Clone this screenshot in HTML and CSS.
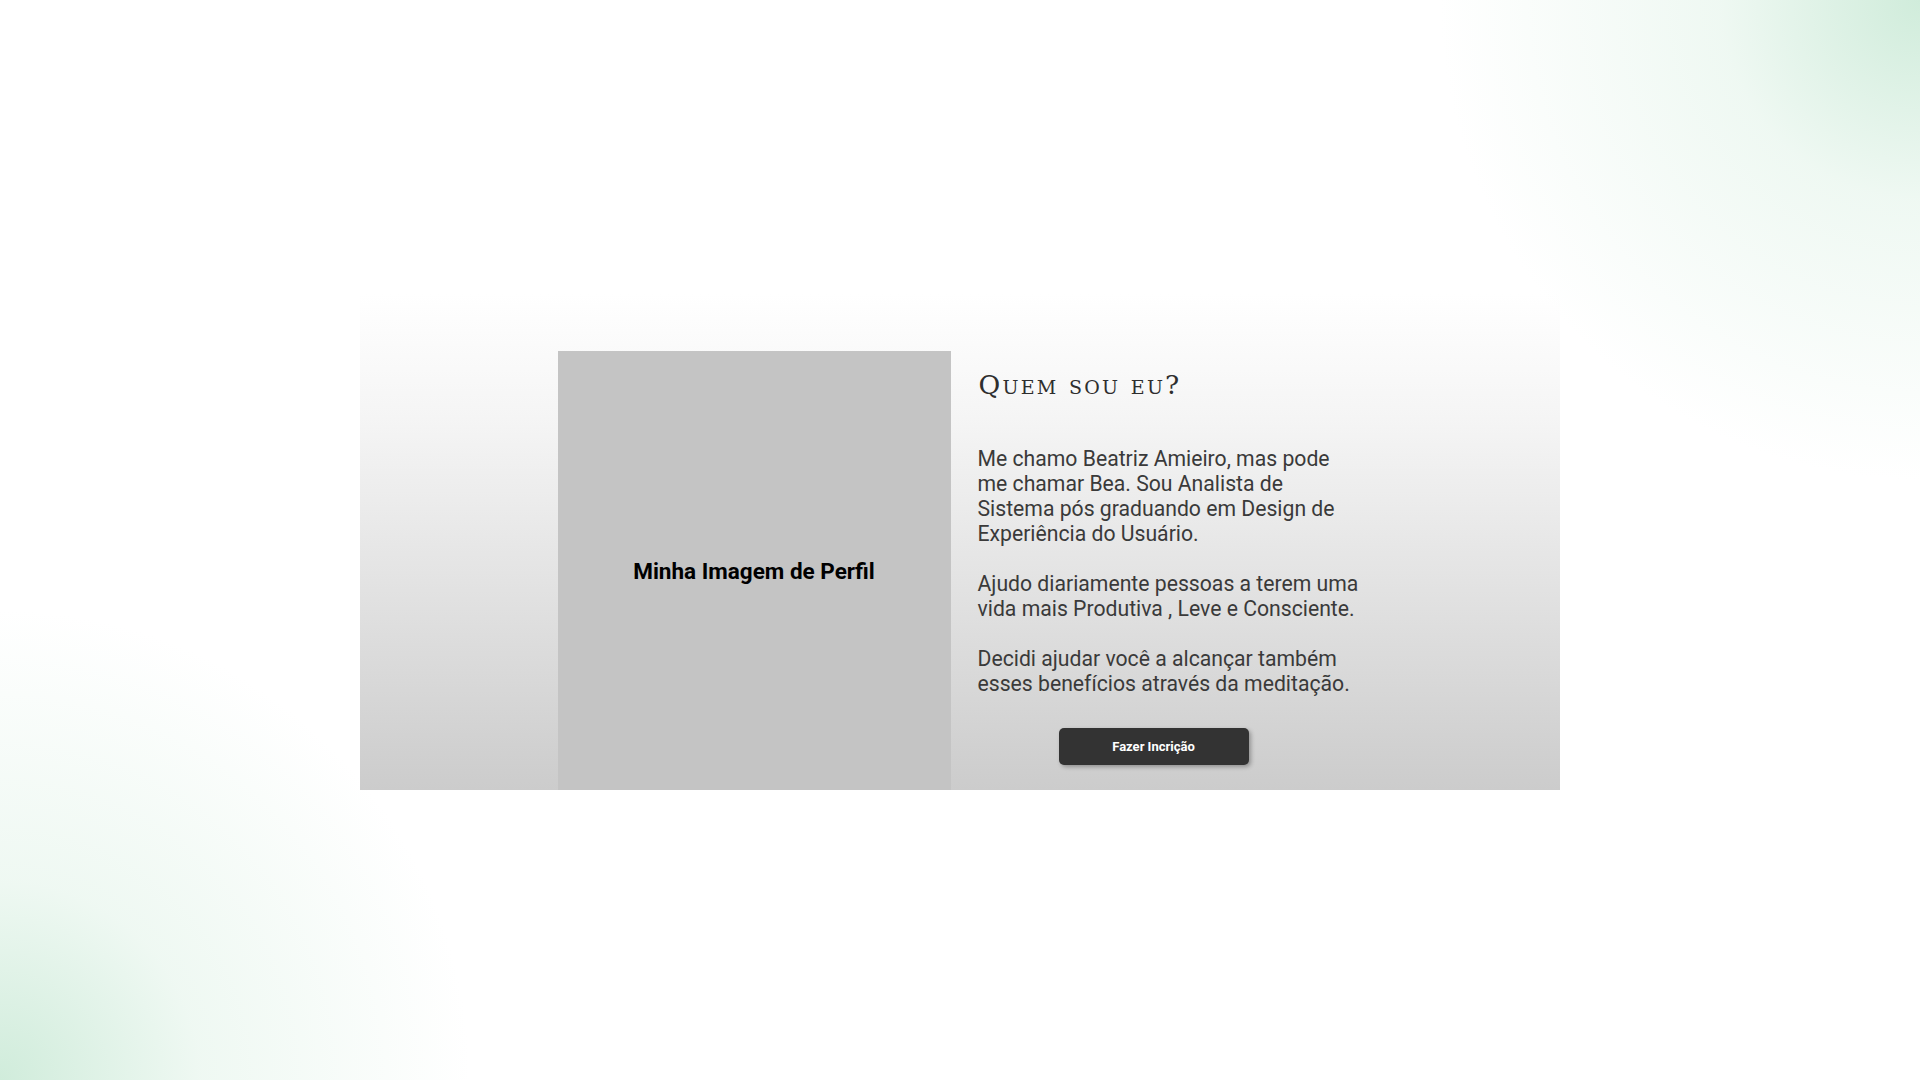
FILE: index.html
```html
<!DOCTYPE html>
<html lang="pt-BR">
<head>
<meta charset="utf-8">
<title>Quem sou eu?</title>
<link rel="stylesheet" href="styles.css">
</head>
<body>
<main class="page">
  <section class="about-section">
    <div class="about-inner">
      <div class="photo">
        <span class="photo-label">Minha Imagem de Perfil</span>
      </div>
      <div class="about">
        <h2 class="about-title">Quem sou eu?</h2>
        <p class="about-text">Me chamo Beatriz Amieiro, mas pode me chamar Bea. Sou Analista de Sistema pós graduando em Design de Experiência do Usuário.</p>
        <p class="about-text">Ajudo diariamente pessoas a terem uma vida mais Produtiva , Leve e Consciente.</p>
        <p class="about-text">Decidi ajudar você a alcançar também esses benefícios através da meditação.</p>
        <button class="btn-subscribe" type="button">Fazer Incrição</button>
      </div>
    </div>
  </section>
</main>
</body>
</html>
```
FILE: styles.css
```css
html, body {
  margin: 0;
  padding: 0;
}

body {
  width: 100%;
  min-height: 1080px;
  font-family: Roboto, "Liberation Sans", sans-serif;
  background-color: #ffffff;
  background-image:
    radial-gradient(circle at 100% 0%, rgba(208, 236, 219, 1) 0px, rgba(228, 244, 234, 0.6) 200px, rgba(255, 255, 255, 0) 480px),
    radial-gradient(circle at 0% 100%, rgba(208, 236, 219, 1) 0px, rgba(228, 244, 234, 0.6) 200px, rgba(255, 255, 255, 0) 470px);
  background-repeat: no-repeat;
  overflow: hidden;
}

.page {
  padding-top: 294px;
}

.about-section {
  width: 1200px;
  height: 496px;
  margin: 0 auto;
  background: linear-gradient(180deg, rgba(255, 255, 255, 0) 0%, #f5f5f5 25%, #cccccc 100%);
  box-sizing: border-box;
  padding-top: 57px;
}

.about-inner {
  display: flex;
  justify-content: center;
  align-items: stretch;
  height: 100%;
}

.photo {
  width: 393px;
  background: #c4c4c4;
  display: flex;
  align-items: center;
  justify-content: center;
}

.photo-label {
  font-family: Roboto, "Liberation Sans", sans-serif;
  font-weight: 700;
  font-size: 22.5px;
  color: #000000;
}

.about {
  width: 385px;
  padding-left: 27px;
  display: flex;
  flex-direction: column;
  align-items: flex-start;
}

.about-title {
  margin: 19px 0 0 1px;
  font-family: "DejaVu Serif", "Liberation Serif", serif;
  font-variant: small-caps;
  font-weight: 400;
  font-size: 26.5px;
  line-height: 30px;
  letter-spacing: 2.2px;
  color: #2e2e2e;
  flex-shrink: 0;
}

.about-text {
  margin: 46px 0 0 0;
  font-size: 21.2px;
  line-height: 25px;
  color: #3a3a3a;
  flex-shrink: 0;
}

.about-text + .about-text {
  margin-top: 25px;
}

.btn-subscribe {
  margin: 32px 0 0 81px;
  width: 190px;
  height: 37px;
  flex-shrink: 0;
  border: none;
  border-radius: 5px;
  background: #333333;
  color: #ffffff;
  font-family: Roboto, "Liberation Sans", sans-serif;
  font-weight: 700;
  font-size: 13px;
  box-shadow: 2px 2px 4px rgba(0, 0, 0, 0.3);
  cursor: pointer;
}
```
